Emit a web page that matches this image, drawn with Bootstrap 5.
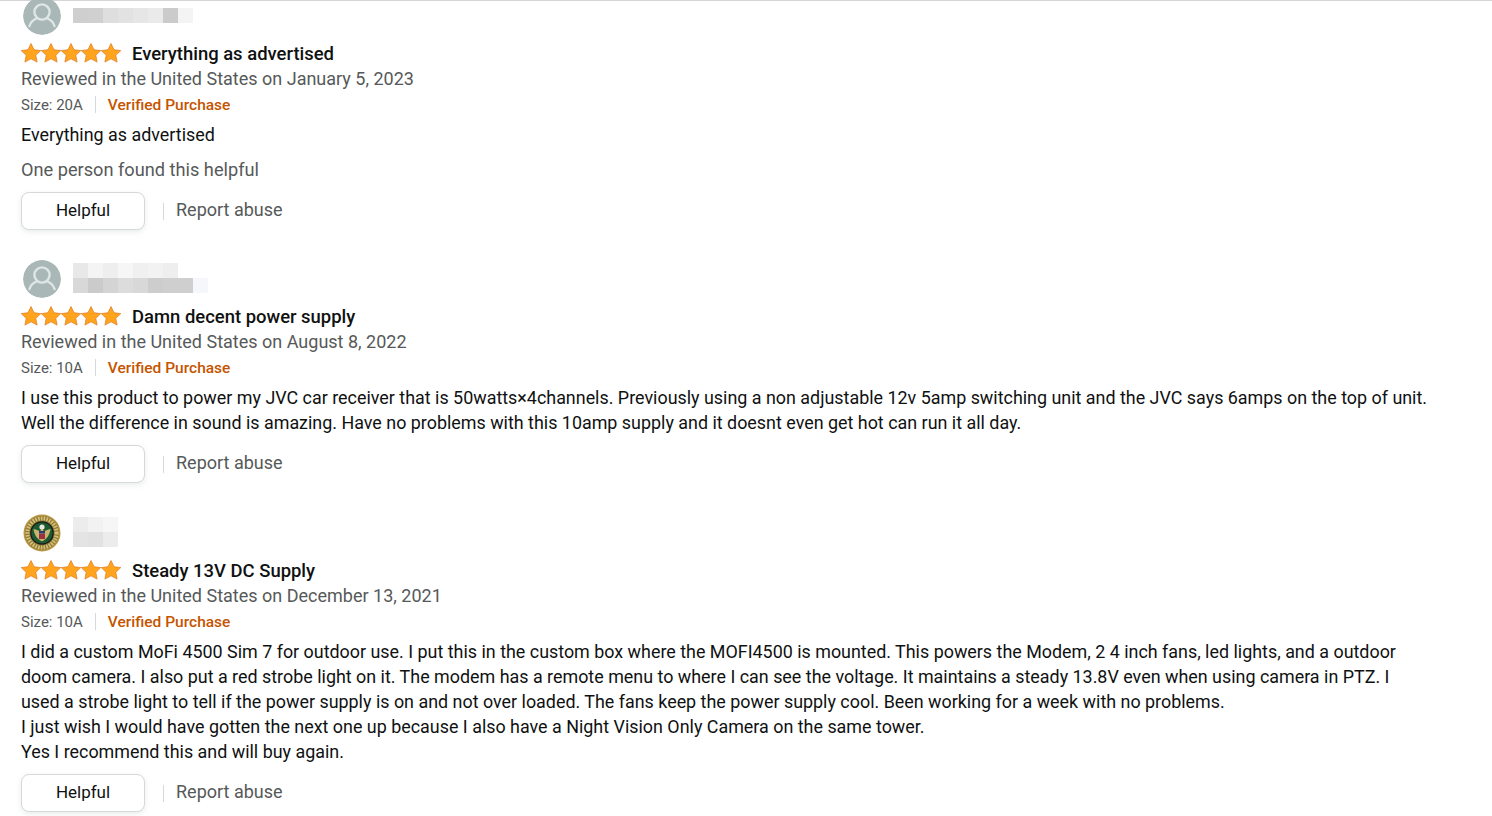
<!DOCTYPE html>
<html lang="en">
<head>
  <meta charset="UTF-8" />
  <meta name="viewport" content="width=device-width, initial-scale=1.0"/>
  <title>Customer reviews</title>
  <link href="https://cdn.jsdelivr.net/npm/bootstrap@5.3.3/dist/css/bootstrap.min.css" rel="stylesheet">
  <style>
    html, body { height: 816px; overflow: hidden; }
    body { font-family: Roboto, "Liberation Sans", sans-serif; font-size: 18px; line-height: 25px; color: #0f1111; background: #fff; }
    .top-rule { height: 1px; background: #d5d5d5; }
    .review-list { padding-left: 21px; margin-top: -4px; }
    .review-item { height: 263px; }
    .review-item.short-item { height: 254px; }
    .profile-row { height: 38px; padding-left: 2px; gap: 12px; }
    .avatar-round { width: 38px; height: 38px; flex: none; }
    .name-blur { width: 135px; height: 30px; margin-top: -2px; filter: blur(.6px); }
    .name-blur.narrow-blur { width: 45px; }
    .name-blur span { display: block; width: 15px; height: 15px; }
    .title-row { height: 25px; margin-top: 6px; gap: 11px; }
    .star-row { width: 100px; margin-top: -2px; }
    .review-title { font-weight: 500; font-size: 18.45px; padding-top: 2px; }
    .muted-line { color: #565959; }
    .meta-row { font-size: 15px; line-height: 26px; color: #565959; height: 26px; padding-top: 1px; }
    .meta-sep { width: 1px; height: 17px; background: #d5d9d9; margin: 0 12px; }
    .verified { color: #c45500; font-weight: 500; font-size: 15.5px; }
    .review-body { margin-top: 5px; font-size: 17.9px; white-space: nowrap; }
    .found-line { margin-top: 10px; font-size: 18.2px; }
    .helpful-btn { width: 124px; height: 38px; padding: 0; font-size: 17px; color: #0f1111; background: #fff; border: 1px solid #d5d9d9; border-radius: 8px; box-shadow: 0 2px 5px rgba(213,217,217,.5); }
    .action-row { margin-top: 10px; }
    .action-sep { width: 1px; height: 17px; background: #d5d9d9; margin: 0 12px 0 18px; }
    .report-link { margin-top: -3px; }
  </style>
</head>
<body>
  <div class="top-rule"></div>
  <div class="review-list">

    <div class="review-item">
      <div class="profile-row d-flex align-items-center">
        <svg class="avatar-round" viewBox="0 0 38 38"><use href="#avatar"/></svg>
        <div class="name-blur d-flex flex-wrap align-content-center">
          <span style="background:#cfcfcf"></span><span style="background:#d0d0d0"></span><span style="background:#dedede"></span><span style="background:#e2e2e2"></span><span style="background:#e6e6e6"></span><span style="background:#eaeaea"></span><span style="background:#cbcbcb"></span><span style="background:#f4f4f4"></span><span style="background:#fff"></span>
        </div>
      </div>
      <div class="title-row d-flex align-items-center">
        <svg class="star-row" height="20" viewBox="0 0 100 20"><use href="#stars"/></svg>
        <span class="review-title">Everything as advertised</span>
      </div>
      <div class="muted-line">Reviewed in the United States on January 5, 2023</div>
      <div class="meta-row d-flex align-items-center">Size: 20A<span class="meta-sep"></span><span class="verified">Verified Purchase</span></div>
      <div class="review-body">Everything as advertised</div>
      <div class="muted-line found-line">One person found this helpful</div>
      <div class="action-row d-flex align-items-center">
        <button type="button" class="btn helpful-btn">Helpful</button>
        <span class="action-sep"></span>
        <span class="muted-line report-link">Report abuse</span>
      </div>
    </div>

    <div class="review-item short-item">
      <div class="profile-row d-flex align-items-center">
        <svg class="avatar-round" viewBox="0 0 38 38"><use href="#avatar"/></svg>
        <div class="name-blur d-flex flex-wrap align-content-center">
          <span style="background:#e8e8e8"></span><span style="background:#f4f4f4"></span><span style="background:#eeeeee"></span><span style="background:#f6f6f6"></span><span style="background:#f0f0f0"></span><span style="background:#f2f2f2"></span><span style="background:#eeeeee"></span><span style="background:#fff"></span><span style="background:#fff"></span>
          <span style="background:#d8d8d8"></span><span style="background:#cbcbcb"></span><span style="background:#d4d4d4"></span><span style="background:#dcdcdc"></span><span style="background:#d8d8d8"></span><span style="background:#cdcdcd"></span><span style="background:#cfcfcf"></span><span style="background:#cfcfcf"></span><span style="background:#f6f7fb"></span>
        </div>
      </div>
      <div class="title-row d-flex align-items-center">
        <svg class="star-row" height="20" viewBox="0 0 100 20"><use href="#stars"/></svg>
        <span class="review-title">Damn decent power supply</span>
      </div>
      <div class="muted-line">Reviewed in the United States on August 8, 2022</div>
      <div class="meta-row d-flex align-items-center">Size: 10A<span class="meta-sep"></span><span class="verified">Verified Purchase</span></div>
      <div class="review-body">I use this product to power my JVC car receiver that is 50watts×4channels. Previously using a non adjustable 12v 5amp switching unit and the JVC says 6amps on the top of unit.<br>Well the difference in sound is amazing. Have no problems with this 10amp supply and it doesnt even get hot can run it all day.</div>
      <div class="action-row d-flex align-items-center">
        <button type="button" class="btn helpful-btn">Helpful</button>
        <span class="action-sep"></span>
        <span class="muted-line report-link">Report abuse</span>
      </div>
    </div>

    <div class="review-item">
      <div class="profile-row d-flex align-items-center">
        <svg class="avatar-round" viewBox="0 0 38 38">
          <circle cx="19" cy="19" r="18.5" fill="#b8953f"/>
          <circle cx="19" cy="19" r="17" fill="#8d7a3c"/>
          <circle cx="19" cy="19" r="14.6" fill="none" stroke="#d8c274" stroke-width="4" stroke-dasharray="1.6 1.2"/>
          <circle cx="19" cy="19" r="11.8" fill="#1a1a12"/>
          <circle cx="19" cy="19" r="10.6" fill="#1c5a34"/>
          <path d="M10.5 15c3 1 5.500 1 6.500 3l2-5 2 5c1-2 3.500-2 6.500-3-1 6-3 9.500-8.500 12.500-5.500-3-7.500-6.500-8.500-12.500z" fill="#c9b469"/>
          <circle cx="19" cy="13" r="2.6" fill="#e9e6da"/>
          <rect x="16" y="17" width="6" height="8" fill="#f0e8e0"/>
          <path d="M16 19.500h6v5.500h-6z" fill="#9a3040"/>
          <rect x="16" y="17" width="6" height="2.500" fill="#2c3d74"/>
        </svg>
        <div class="name-blur narrow-blur d-flex flex-wrap align-content-center">
          <span style="background:#ececec"></span><span style="background:#f2f2f2"></span><span style="background:#f6f6f6"></span>
          <span style="background:#e4e4e4"></span><span style="background:#e2e2e2"></span><span style="background:#ececec"></span>
        </div>
      </div>
      <div class="title-row d-flex align-items-center">
        <svg class="star-row" height="20" viewBox="0 0 100 20"><use href="#stars"/></svg>
        <span class="review-title">Steady 13V DC Supply</span>
      </div>
      <div class="muted-line">Reviewed in the United States on December 13, 2021</div>
      <div class="meta-row d-flex align-items-center">Size: 10A<span class="meta-sep"></span><span class="verified">Verified Purchase</span></div>
      <div class="review-body">I did a custom MoFi 4500 Sim 7 for outdoor use. I put this in the custom box where the MOFI4500 is mounted. This powers the Modem, 2 4 inch fans, led lights, and a outdoor<br>doom camera. I also put a red strobe light on it. The modem has a remote menu to where I can see the voltage. It maintains a steady 13.8V even when using camera in PTZ. I<br>used a strobe light to tell if the power supply is on and not over loaded. The fans keep the power supply cool. Been working for a week with no problems.<br>I just wish I would have gotten the next one up because I also have a Night Vision Only Camera on the same tower.<br>Yes I recommend this and will buy again.</div>
      <div class="action-row d-flex align-items-center">
        <button type="button" class="btn helpful-btn">Helpful</button>
        <span class="action-sep"></span>
        <span class="muted-line report-link">Report abuse</span>
      </div>
    </div>
  </div>

  <svg width="0" height="0" class="d-block">
    <defs>
      <clipPath id="avatar-clip"><circle cx="19" cy="19" r="19"/></clipPath>
      <g id="avatar" clip-path="url(#avatar-clip)">
        <circle cx="19" cy="19" r="19" fill="#a9b7b6"/>
        <circle cx="19" cy="15" r="7.6" fill="none" stroke="#dfe6e6" stroke-width="2.4"/>
        <path d="M6.500 29c1-3.500 3.500-6 7-7.500M31.500 29c-1-3.500-3.500-6-7-7.500" fill="none" stroke="#dfe6e6" stroke-width="2.400" stroke-linecap="round"/>
      </g>
      <path id="one-star" d="M10 .5l3 6.200 6.800.9-5 4.700 1.300 6.800-6.100-3.300-6.100 3.300 1.300-6.800-5-4.700 6.800-.9z" fill="#ffa41c" stroke="#de7921" stroke-width=".7"/>
      <g id="stars">
        <use href="#one-star"/><use href="#one-star" x="20"/><use href="#one-star" x="40"/><use href="#one-star" x="60"/><use href="#one-star" x="80"/>
      </g>
    </defs>
  </svg>

  <script src="https://cdn.jsdelivr.net/npm/bootstrap@5.3.3/dist/js/bootstrap.bundle.min.js"></script>
</body>
</html>
